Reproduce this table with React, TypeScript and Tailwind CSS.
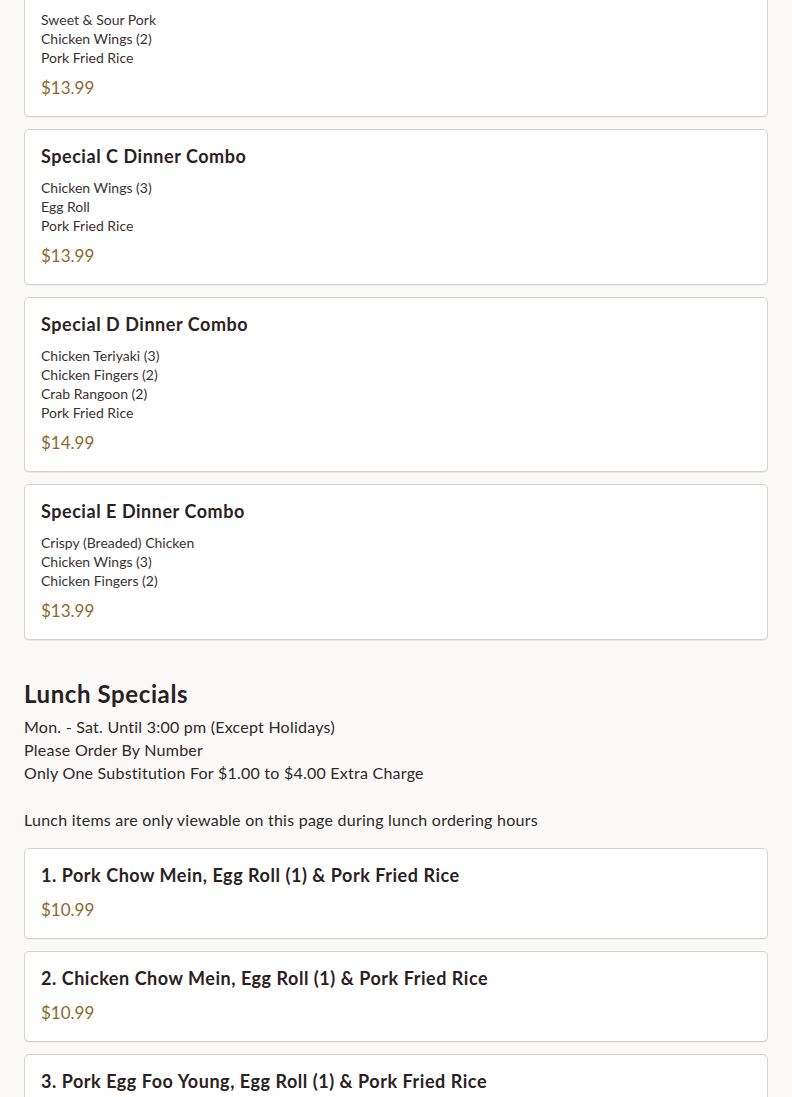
const dinner = [
  { name: 'Special B Dinner Combo', items: ['Sweet & Sour Pork', 'Chicken Wings (2)', 'Pork Fried Rice'], price: '$13.99' },
  { name: 'Special C Dinner Combo', items: ['Chicken Wings (3)', 'Egg Roll', 'Pork Fried Rice'], price: '$13.99' },
  {
    name: 'Special D Dinner Combo',
    items: ['Chicken Teriyaki (3)', 'Chicken Fingers (2)', 'Crab Rangoon (2)', 'Pork Fried Rice'],
    price: '$14.99',
  },
  {
    name: 'Special E Dinner Combo',
    items: ['Crispy (Breaded) Chicken', 'Chicken Wings (3)', 'Chicken Fingers (2)'],
    price: '$13.99',
  },
];

const lunch = [
  { name: '1. Pork Chow Mein, Egg Roll (1) & Pork Fried Rice', price: '$10.99' },
  { name: '2. Chicken Chow Mein, Egg Roll (1) & Pork Fried Rice', price: '$10.99' },
  { name: '3. Pork Egg Foo Young, Egg Roll (1) & Pork Fried Rice', price: '$10.99' },
];

function MenuCard({ name, items, price }: { name: string; items?: string[]; price: string }) {
  return (
    <div className="bg-white border border-[#d5d2cf] rounded-[5px] shadow-[0_1px_1px_rgba(0,0,0,0.06)] p-4">
      <h3 className="text-[18px] leading-5 font-bold tracking-[0.03em] text-[#2a2222] mb-3">{name}</h3>
      {items && (
        <div className="mb-2">
          {items.map((it) => (
            <p key={it} className="text-[14px] leading-[19px] text-[#3a3232]">
              {it}
            </p>
          ))}
        </div>
      )}
      <p className="text-[17px] leading-[25px] text-[#8b6a2c]">{price}</p>
    </div>
  );
}

export default function App() {
  return (
    <div className="min-h-screen bg-[#faf9f7] font-['Lato','Open_Sans',sans-serif] overflow-hidden">
      <div className="px-6 -mt-[39px] pb-10">
        <div className="flex flex-col gap-3">
          {dinner.map((d) => (
            <MenuCard key={d.name} {...d} />
          ))}
        </div>

        <section className="mt-10">
          <h2 className="text-[24px] leading-7 font-bold tracking-[0.025em] text-[#2a2222]">Lunch Specials</h2>
          <div className="mt-[7px] text-[16px] leading-[23px] tracking-[0.015em] text-[#2f2828]">
            <p>Mon. - Sat. Until 3:00 pm (Except Holidays)</p>
            <p>Please Order By Number</p>
            <p>Only One Substitution For $1.00 to $4.00 Extra Charge</p>
            <p className="mt-6">Lunch items are only viewable on this page during lunch ordering hours</p>
          </div>
          <div className="mt-[17px] flex flex-col gap-3">
            {lunch.map((l) => (
              <MenuCard key={l.name} {...l} />
            ))}
          </div>
        </section>
      </div>
    </div>
  );
}
